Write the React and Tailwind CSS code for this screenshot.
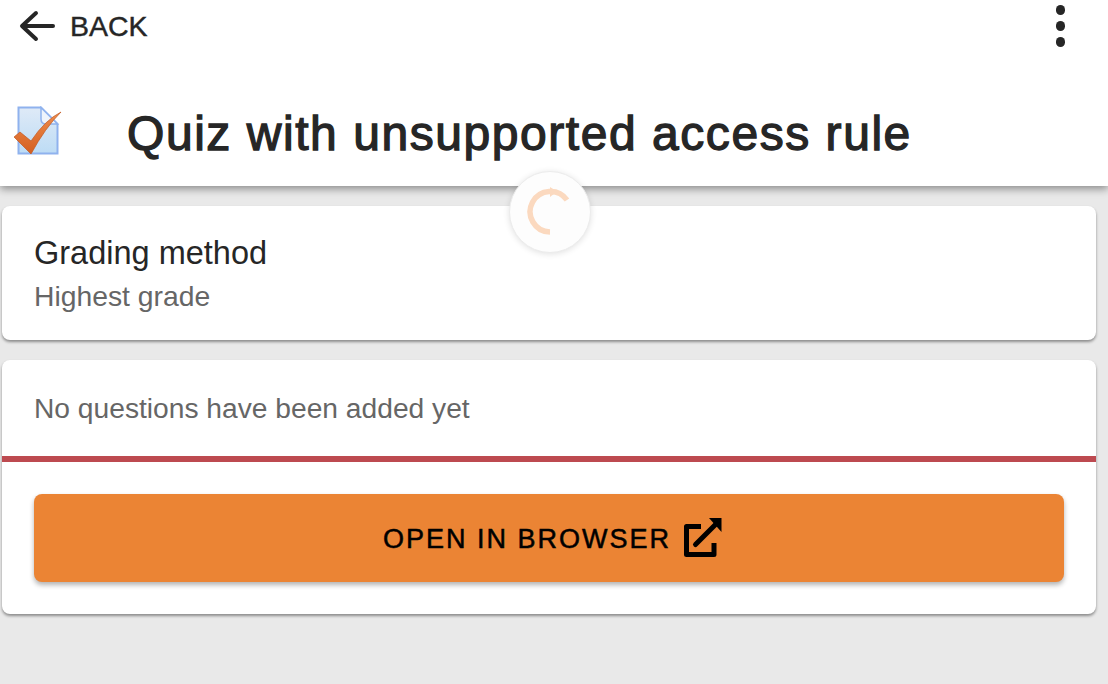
function QuizIcon() {
  return (
    <svg className="mb-[6px]" width="48" height="50" viewBox="0 0 48 50">
      <defs>
        <linearGradient id="doc" x1="0" y1="0" x2="0" y2="1">
          <stop offset="0" stopColor="#dfeaf7" />
          <stop offset="1" stopColor="#bddcf5" />
        </linearGradient>
        <linearGradient id="tick" x1="0" y1="0" x2="0" y2="1">
          <stop offset="0" stopColor="#ee8d4e" />
          <stop offset="1" stopColor="#d45f20" />
        </linearGradient>
      </defs>
      <path d="M4.5 1.5H27L43.5 18V47.5H4.5Z" fill="url(#doc)" stroke="#8fb2ee" strokeWidth="2" />
      <path d="M27 1.5V13Q27 18 32 18H43.5Z" fill="#eef4fc" stroke="#8fb2ee" strokeWidth="1.5" />
      <path d="M0 31L6 26L17 35Q31 14 47 6Q31 22 17 48Z" fill="url(#tick)" stroke="#c2571f" strokeWidth="0.7" />
    </svg>
  )
}

function OpenIcon() {
  return (
    <svg width="40" height="42" viewBox="0 0 40 42" fill="none" stroke="#000" strokeWidth="5">
      <path d="M18 9.5H3.5V37.5H31V26" strokeLinejoin="round" />
      <path d="M12.5 27.5L33 7" strokeLinecap="round" />
      <path d="M26 1H38.5V15Z" fill="#000" stroke="none" />
    </svg>
  )
}

function Spinner() {
  return (
    <div className="absolute left-[509px] top-[171px] w-[82px] h-[82px] rounded-full bg-[#fdfdfd] border border-[#ececec] shadow-[0_1px_6px_rgba(0,0,0,0.12)] flex items-center justify-center">
      <svg width="50" height="52" viewBox="0 0 50 52" fill="none">
        <path d="M25 46A20.3 20.3 0 1 1 42 14" stroke="#fbd9bf" strokeWidth="5.5" />
        <path d="M25 1L32 5.5L25 11Z" fill="#fbd9bf" />
      </svg>
    </div>
  )
}

export default function App() {
  return (
    <div className="relative h-[684px] bg-[#e9e9e9] overflow-hidden font-['Liberation_Sans',Arial,sans-serif] text-[#262626]">
      <header className="h-[186px] bg-white shadow-[0_3px_8px_rgba(0,0,0,0.4)]">
        <div className="h-[52px] flex items-center pl-[18px] pr-[43px] justify-between">
          <div className="flex items-center gap-[14px]">
            <svg width="38" height="34" viewBox="0 0 38 34" fill="none" stroke="#262626" strokeWidth="4" strokeLinecap="round" strokeLinejoin="round">
              <path d="M35 17H5" />
              <path d="M18 4L4 17L18 30" />
            </svg>
            <span className="text-[28.5px] [-webkit-text-stroke:0.4px_#262626]">BACK</span>
          </div>
          <div className="flex flex-col gap-[6.5px]">
            <span className="w-[9.5px] h-[9.5px] rounded-full bg-[#262626]" />
            <span className="w-[9.5px] h-[9.5px] rounded-full bg-[#262626]" />
            <span className="w-[9.5px] h-[9.5px] rounded-full bg-[#262626]" />
          </div>
        </div>
        <div className="flex items-center h-[110px] mt-[27px] pl-[14px]">
          <QuizIcon />
          <h1 className="ml-[65px] text-[48px] tracking-[1.55px] [-webkit-text-stroke:1.3px_#262626]">Quiz with unsupported access rule</h1>
        </div>
      </header>

      <main className="pl-[2px] pr-[12px] pt-[20px] flex flex-col gap-[20px]">
        <section className="h-[134px] bg-white rounded-[8px] shadow-[0_2px_3px_rgba(0,0,0,0.4)] px-[32px] pt-[29px]">
          <h2 className="text-[32.5px] leading-[36px]">Grading method</h2>
          <p className="text-[28.3px] leading-[36px] text-[#666] mt-[7px]">Highest grade</p>
        </section>
        <section className="h-[254px] bg-white rounded-[8px] shadow-[0_2px_3px_rgba(0,0,0,0.4)]">
          <p className="h-[96px] px-[32px] flex items-center text-[28.2px] text-[#666]">No questions have been added yet</p>
          <div className="h-[6px] bg-[#bd4a50]" />
          <div className="px-[32px] pt-[32px]">
            <button className="w-full h-[88px] pl-[8px] bg-[#eb8434] rounded-[8px] shadow-[0_3px_5px_rgba(0,0,0,0.3)] flex items-center justify-center gap-[12px] text-black text-[27px] tracking-[2px] [-webkit-text-stroke:0.5px_#000]">
              <span className="mt-[2px]">OPEN IN BROWSER</span>
              <OpenIcon />
            </button>
          </div>
        </section>
      </main>

      <Spinner />
    </div>
  )
}
